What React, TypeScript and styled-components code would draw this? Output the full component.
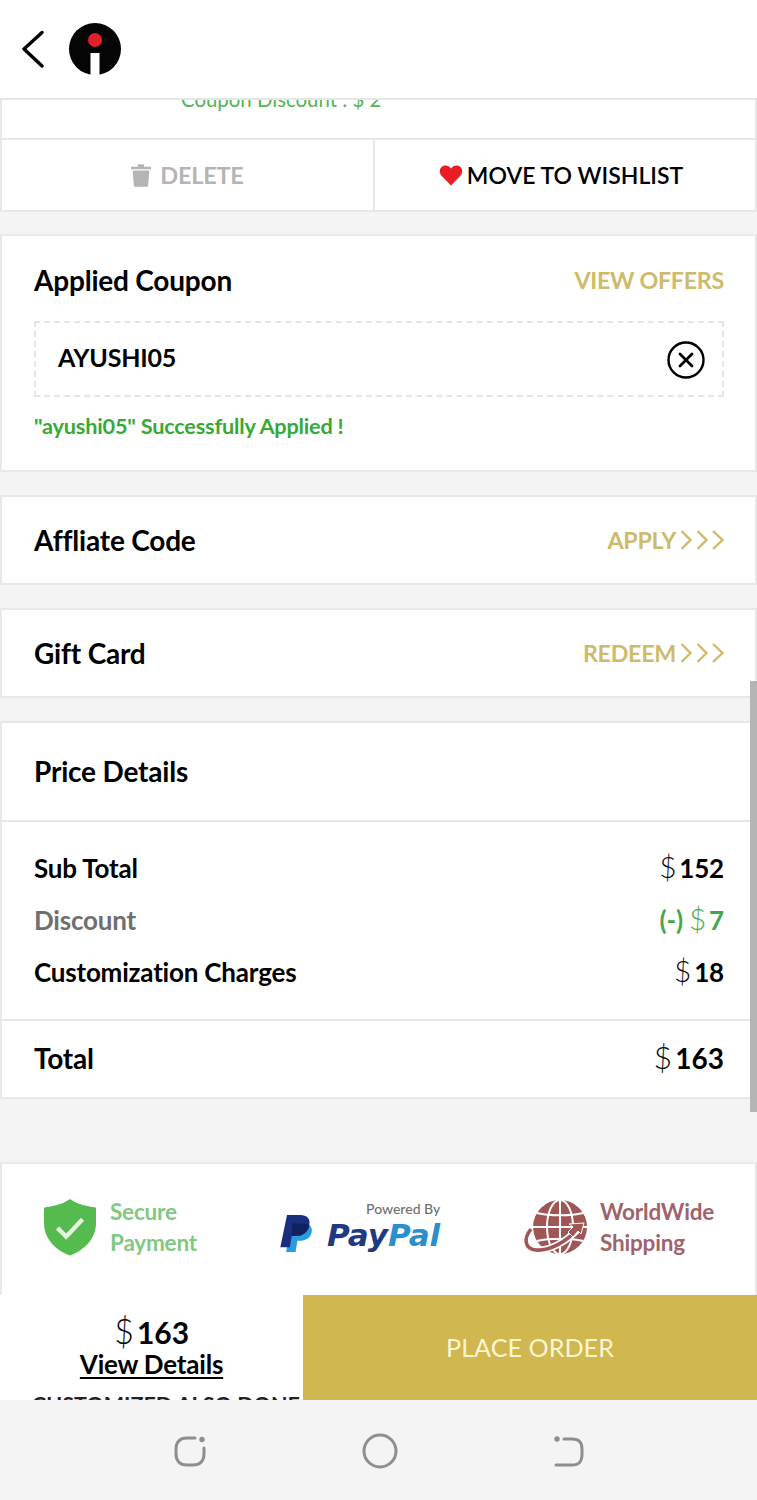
import React from "react";
import styled, { createGlobalStyle } from "styled-components";

const GOLD = "#cdbb6b";

const GlobalStyle = createGlobalStyle`
  html, body {
    margin: 0;
    padding: 0;
    background: #f4f4f4;
  }
  * {
    box-sizing: border-box;
  }
`;

const Page = styled.div`
  width: 757px;
  height: 1500px;
  display: flex;
  flex-direction: column;
  overflow: hidden;
  font-family: Lato, "Noto Sans", sans-serif;
  color: #000;
  background: #f4f4f4;
`;

const Header = styled.header`
  height: 100px;
  flex: none;
  display: flex;
  align-items: center;
  gap: 21px;
  padding: 0 0 0 21px;
  background: #fff;
  border-bottom: 2px solid #e6e6e6;
`;

const Scroller = styled.main`
  position: relative;
  flex: none;
  height: 1195px;
  overflow: hidden;
`;

const ScrollThumb = styled.div`
  position: absolute;
  top: 581px;
  right: 0;
  width: 7px;
  height: 431px;
  background: #b5b5b5;
`;

const Card = styled.section<{ $gap?: number }>`
  margin-bottom: ${(p) => p.$gap ?? 23}px;
  background: #fff;
  border: 2px solid #e8e8e8;
`;

const ProductCard = styled(Card)`
  border-top: 0;
`;

const ClippedCoupon = styled.div`
  height: 40px;
  overflow: hidden;
  padding-left: 179px;
  font-size: 20.4px;
  line-height: 20px;
  color: #55b255;
  border-bottom: 2px solid #e8e8e8;
  span {
    display: block;
    margin-top: -11px;
  }
`;

const Actions = styled.div`
  display: grid;
  grid-template-columns: 371px 1fr;
  height: 70px;
`;

const ActionButton = styled.div<{ $muted?: boolean }>`
  display: flex;
  align-items: center;
  justify-content: center;
  gap: ${(p) => (p.$muted ? 9 : 4)}px;
  padding-right: ${(p) => (p.$muted ? 0 : 8)}px;
  font-size: ${(p) => (p.$muted ? 23.6 : 23)}px;
  font-weight: ${(p) => (p.$muted ? 700 : 600)};
  letter-spacing: ${(p) => (p.$muted ? -0.3 : 0)}px;
  color: ${(p) => (p.$muted ? "#b5b5b5" : "#000")};
  & + & {
    border-left: 2px solid #e8e8e8;
  }
`;

const CouponBody = styled.div`
  height: 234px;
  padding: 26px 31px 0 32px;
`;

const RowBetween = styled.div`
  display: flex;
  align-items: center;
  justify-content: space-between;
`;

const CardTitle = styled.h2`
  margin: 0;
  font-size: 28px;
  line-height: 36px;
  font-weight: 700;
  letter-spacing: -0.2px;
`;

const GoldLink = styled.span`
  display: flex;
  align-items: center;
  gap: 4px;
  padding-bottom: 1px;
  font-size: 23.3px;
  font-weight: 700;
  letter-spacing: -0.3px;
  color: ${GOLD};
`;

const CouponBox = styled.div`
  height: 76px;
  margin-top: 23px;
  padding: 0 17px 0 22px;
  display: flex;
  align-items: center;
  justify-content: space-between;
  border: 2px dashed #e4e4e4;
  font-size: 25px;
  font-weight: 700;
  letter-spacing: -0.2px;
`;

const CouponCode = styled.span`
  margin-top: -5px;
`;

const ClearSvg = styled.svg`
  margin-top: 2px;
`;

const SuccessText = styled.p`
  margin: 13px 0 0;
  font-size: 21.7px;
  line-height: 32px;
  font-weight: 700;
  letter-spacing: -0.2px;
  color: #36a936;
`;

const LinkRow = styled(RowBetween)`
  height: 86px;
  padding: 0 31px 0 32px;
`;

const PriceTitle = styled.div`
  height: 99px;
  padding: 0 32px 2px;
  display: flex;
  align-items: center;
  border-bottom: 2px solid #e8e8e8;
`;

const PriceRows = styled.div`
  height: 199px;
  padding: 20px 31px 0 32px;
  display: flex;
  flex-direction: column;
  border-bottom: 2px solid #e8e8e8;
`;

const PriceRow = styled(RowBetween)<{ $muted?: boolean }>`
  height: 52px;
  font-size: 26px;
  font-weight: 700;
  letter-spacing: -0.2px;
  color: ${(p) => (p.$muted ? "#6f6f6f" : "#000")};
`;

const Amount = styled.span<{ $green?: boolean; $large?: boolean }>`
  font-size: ${(p) => (p.$large ? 28 : 26)}px;
  font-weight: 700;
  color: ${(p) => (p.$green ? "#45a845" : "#000")};
`;

const Dollar = styled.span`
  font-weight: 300;
  font-size: 1.15em;
  line-height: 0;
  margin-right: 3px;
  opacity: 0.95;
`;

const TotalRow = styled(RowBetween)`
  height: 76px;
  padding: 0 31px 2px 32px;
`;

const TrustCard = styled(Card)`
  margin: 63px 0 0;
  height: 134px;
  padding-bottom: 6px;
  display: flex;
  align-items: center;
  border-bottom: 0;
`;

const TrustItem = styled.div<{ $width: number; $left: number; $gap: number }>`
  width: ${(p) => p.$width}px;
  padding-left: ${(p) => p.$left}px;
  display: flex;
  align-items: center;
  gap: ${(p) => p.$gap}px;
`;

const TrustLabel = styled.div<{ $color: string }>`
  font-size: 22.5px;
  line-height: 31px;
  font-weight: 700;
  letter-spacing: -0.2px;
  color: ${(p) => p.$color};
`;

const PayPalBlock = styled.div`
  display: flex;
  flex-direction: column;
  align-items: flex-end;
`;

const PoweredBy = styled.span`
  font-size: 14px;
  line-height: 16px;
  font-weight: 500;
  color: #6f6f6f;
`;

const PayPalWord = styled.span`
  font-family: "DejaVu Sans", sans-serif;
  font-style: italic;
  font-weight: 700;
  font-size: 31px;
  line-height: 36px;
  color: #1f3a7f;
  em {
    font-style: inherit;
    color: #2a8fcf;
  }
`;

const PayPalSvg = styled.svg`
  align-self: flex-end;
`;

const CheckoutBar = styled.div`
  flex: none;
  height: 105px;
  display: grid;
  grid-template-columns: 303px 1fr;
`;

const TotalPane = styled.div`
  position: relative;
  overflow: hidden;
  padding-top: 20px;
  background: #fff;
  text-align: center;
`;

const BarAmount = styled.div`
  font-size: 30px;
  line-height: 35px;
  font-weight: 700;
`;

const ViewDetails = styled.a`
  display: block;
  font-size: 26px;
  line-height: 28px;
  font-weight: 700;
  letter-spacing: -0.2px;
  color: #000;
  text-decoration: underline;
  text-underline-offset: 3px;
`;

const PeekText = styled.span`
  position: absolute;
  top: 97px;
  left: 32px;
  font-size: 21.5px;
  line-height: 24px;
  font-weight: 700;
  white-space: nowrap;
  color: #222;
`;

const PlaceOrder = styled.button`
  border: 0;
  padding: 0 0 2px;
  background: #d1b74f;
  color: #fdf6d0;
  font-family: inherit;
  font-size: 25.2px;
  font-weight: 400;
`;

const SystemNav = styled.nav`
  flex: 1;
  display: flex;
  align-items: center;
  gap: 156px;
  padding: 2px 0 0 174px;
  background: #f4f4f4;
`;

const Chevron = () => (
  <svg width="26" height="38" viewBox="0 0 26 38" fill="none" stroke="#000" strokeWidth="3.4" strokeLinecap="round" strokeLinejoin="round">
    <path d="M21 2.5 3 19l18 17" />
  </svg>
);

const Logo = () => (
  <svg width="54" height="54" viewBox="0 0 54 54">
    <circle cx="27" cy="27" r="26" fill="#050505" />
    <circle cx="27" cy="18" r="7" fill="#e0202a" />
    <path d="M22.500 31h9v22.500h-9z" fill="#fff" />
  </svg>
);

const Trash = () => (
  <svg width="20" height="24" viewBox="0 0 22 26" fill="#b5b5b5">
    <path d="M0 4h22v2.600H0zM7.500 1.200h7V4h-7z" />
    <path d="M1.800 8h18.400l-1.300 16.200c-.1 1-.8 1.800-1.900 1.800H5c-1 0-1.800-.8-1.900-1.800z" />
  </svg>
);

const Heart = () => (
  <svg width="24" height="21" viewBox="0 0 24 22">
    <path fill="#ec1c24" d="M12 21.500 2.300 11.600C-.6 8.600-.3 4.200 2.400 1.900 5.100-.4 9.500-.1 12 3.600 14.500-.1 18.900-.4 21.600 1.900c2.700 2.300 3 6.700.1 9.700z" />
  </svg>
);

const ClearIcon = () => (
  <ClearSvg width="38" height="38" viewBox="0 0 38 38" fill="none" stroke="#000">
    <circle cx="19" cy="19" r="17.500" strokeWidth="2.400" />
    <path d="m13 13 12 12m0-12L13 25" strokeWidth="2.800" strokeLinecap="round" />
  </ClearSvg>
);

const TripleChevron = () => (
  <svg width="44" height="20" viewBox="0 0 44 20" fill="none" stroke={GOLD} strokeWidth="2.400">
    <path d="m1.500 1 9 9-9 9M17.500 1l9 9-9 9M33 1l9.500 9-9.500 9" />
  </svg>
);

const Shield = () => (
  <svg width="52" height="58" viewBox="0 0 54 60">
    <path fill="#55bb4f" d="M27 1c6 4.500 15 7.500 25.500 8.500.8 0 1.500.7 1.500 1.500v15C54 42 42 54 27 59.500 12 54 0 42 0 26V11c0-.8.7-1.500 1.500-1.500C12 8.500 21 5.500 27 1z" />
    <path d="m14 31 9 9 17-18" fill="none" stroke="#e6f6e2" strokeWidth="4.500" />
  </svg>
);

const PayPalMark = () => (
  <PayPalSvg width="33" height="38" viewBox="0 0 34 40">
    <path fill="#2a9bdc" d="M12 9h13c6 0 9 4 8 9-1 6-6 9-11 9h-4l-2 12H6z" />
    <path fill="#1a2f80" d="M7 0h14c7 0 11 4 9.500 10.500C29 18 23 22 17 22h-5l-2 12H0z" />
    <path fill="#10215f" d="M12.500 9H26c2 .5 3.500 1.500 4.300 3C28.500 18.500 23 22 17 22h-5z" />
  </PayPalSvg>
);

const Globe = () => (
  <svg width="66" height="56" viewBox="0 0 66 56">
    <circle cx="38" cy="28" r="27" fill="#a15656" />
    <g fill="none" stroke="#fff" strokeWidth="2">
      <ellipse cx="38" cy="28" rx="13" ry="27" />
      <path d="M38 1v54M11 28h54M15 14c12 3 34 3 46 0M15 42c12-3 34-3 46 0" />
      <path d="M9 30C1 40 3 50 14 51c14 1 30-8 43-22" strokeWidth="7" />
    </g>
    <path d="M9 30C1 40 3 50 14 51c14 1 30-8 43-22" fill="none" stroke="#a15656" strokeWidth="3.600" />
    <path d="m62 24-15 1 4 3-5 5 5 5 5-6 3 3z" fill="#a15656" stroke="#fff" strokeWidth="1" />
  </svg>
);

const NavRecent = () => (
  <svg width="32" height="31" viewBox="0 0 32 31" fill="none" stroke="#8e8e8e" strokeWidth="3" strokeLinecap="round">
    <path d="M21 2H13C6 2 2 6 2 13v5c0 7 4 11 11 11h6c7 0 11-4 11-11v-6" />
    <circle cx="28" cy="3.500" r="1.200" fill="#8e8e8e" />
  </svg>
);

const NavHome = () => (
  <svg width="36" height="36" viewBox="0 0 36 36" fill="none" stroke="#8e8e8e" strokeWidth="3">
    <circle cx="18" cy="18" r="16" />
  </svg>
);

const NavBack = () => (
  <svg width="30" height="31" viewBox="0 0 30 31" fill="none" stroke="#8e8e8e" strokeWidth="3" strokeLinecap="round">
    <path d="M10 3h8c7 0 10 3 10 10v5c0 8-3 11-10 11H2" />
    <circle cx="3" cy="3" r="1.200" fill="#8e8e8e" />
  </svg>
);

const priceRows = [
  { label: "Sub Total", value: "152", discount: false },
  { label: "Discount", value: "7", discount: true },
  { label: "Customization Charges", value: "18", discount: false },
];

export default function App() {
  return (
    <Page>
      <GlobalStyle />
      <Header>
        <Chevron />
        <Logo />
      </Header>

      <Scroller>
        <ProductCard $gap={22}>
          <ClippedCoupon>
            <span>Coupon Discount : $ 2</span>
          </ClippedCoupon>
          <Actions>
            <ActionButton $muted>
              <Trash />
              DELETE
            </ActionButton>
            <ActionButton>
              <Heart />
              MOVE TO WISHLIST
            </ActionButton>
          </Actions>
        </ProductCard>

        <Card>
          <CouponBody>
            <RowBetween>
              <CardTitle>Applied Coupon</CardTitle>
              <GoldLink>VIEW OFFERS</GoldLink>
            </RowBetween>
            <CouponBox>
              <CouponCode>AYUSHI05</CouponCode>
              <ClearIcon />
            </CouponBox>
            <SuccessText>"ayushi05" Successfully Applied !</SuccessText>
          </CouponBody>
        </Card>

        <Card>
          <LinkRow>
            <CardTitle>Affliate Code</CardTitle>
            <GoldLink>
              APPLY
              <TripleChevron />
            </GoldLink>
          </LinkRow>
        </Card>

        <Card>
          <LinkRow>
            <CardTitle>Gift Card</CardTitle>
            <GoldLink>
              REDEEM
              <TripleChevron />
            </GoldLink>
          </LinkRow>
        </Card>

        <Card $gap={0}>
          <PriceTitle>
            <CardTitle>Price Details</CardTitle>
          </PriceTitle>
          <PriceRows>
            {priceRows.map((row) => (
              <PriceRow key={row.label} $muted={row.discount}>
                <span>{row.label}</span>
                <Amount $green={row.discount}>
                  {row.discount && "(-) "}
                  <Dollar>$</Dollar>
                  {row.value}
                </Amount>
              </PriceRow>
            ))}
          </PriceRows>
          <TotalRow>
            <CardTitle>Total</CardTitle>
            <Amount $large>
              <Dollar>$</Dollar>163
            </Amount>
          </TotalRow>
        </Card>

        <TrustCard>
          <TrustItem $width={278} $left={42} $gap={14}>
            <Shield />
            <TrustLabel $color="#82c882">
              Secure
              <br />
              Payment
            </TrustLabel>
          </TrustItem>
          <TrustItem $width={242} $left={0} $gap={14}>
            <PayPalMark />
            <PayPalBlock>
              <PoweredBy>Powered By</PoweredBy>
              <PayPalWord>
                Pay<em>Pal</em>
              </PayPalWord>
            </PayPalBlock>
          </TrustItem>
          <TrustItem $width={233} $left={0} $gap={12}>
            <Globe />
            <TrustLabel $color="#a0636b">
              WorldWide
              <br />
              Shipping
            </TrustLabel>
          </TrustItem>
        </TrustCard>

        <ScrollThumb />
      </Scroller>

      <CheckoutBar>
        <TotalPane>
          <BarAmount>
            <Dollar>$</Dollar>163
          </BarAmount>
          <ViewDetails>View Details</ViewDetails>
          <PeekText>CUSTOMIZED ALSO DONE</PeekText>
        </TotalPane>
        <PlaceOrder>PLACE ORDER</PlaceOrder>
      </CheckoutBar>

      <SystemNav>
        <NavRecent />
        <NavHome />
        <NavBack />
      </SystemNav>
    </Page>
  );
}
